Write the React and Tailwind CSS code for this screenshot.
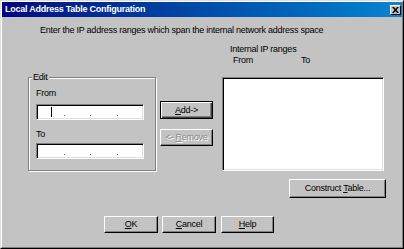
import React from 'react'

const font = { fontFamily: '"Liberation Sans", Arial, sans-serif' }

function Btn({ children, className = '', isDefault = false, disabled = false }) {
  const frame = isDefault
    ? 'border border-black shadow-[inset_1px_1px_#fff,inset_-1px_-1px_#404040,inset_-2px_-2px_#808080]'
    : 'border border-t-white border-l-white border-r-black border-b-black shadow-[inset_-1px_-1px_#808080]'
  return (
    <div className={`flex items-center justify-center bg-[#c3c3c3] text-[9px] tracking-[-0.25px] leading-none whitespace-nowrap ${frame} ${className} ${disabled ? 'text-[#8a8a8a] [text-shadow:1px_1px_#fff]' : 'text-black'}`}>
      {children}
    </div>
  )
}

function IpBox({ caret = false }) {
  return (
    <div className="relative w-[108px] h-[16px] bg-white border border-t-[#808080] border-l-[#808080] border-r-white border-b-white shadow-[inset_1px_1px_#000,inset_-1px_-1px_#dfdfdf] flex items-center">
      <div className="flex pl-[1px]">
        {[0, 1, 2].map(i => (
          <div key={i} className="w-[26.5px] h-[8px] flex items-end justify-end">
            {caret && i === 0 && <div className="w-[1px] h-[10px] bg-black mr-[12px] mb-[-1px]" />}
            <div className="w-[1px] h-[1px] bg-[#707070]" />
          </div>
        ))}
      </div>
    </div>
  )
}

export default function App() {
  return (
    <div style={font} className="w-[404px] h-[249px] bg-[#c3c3c3] border border-t-[#dfdfdf] border-l-[#dfdfdf] border-r-black border-b-black text-[9px] tracking-[-0.25px] text-black">
      <div className="w-full h-full border border-t-white border-l-white border-r-[#808080] border-b-[#808080] flex flex-col">
        <div className="h-[15px] flex items-center justify-between bg-gradient-to-r from-[#000080] to-[#1084d0] pl-[3px] pr-[1px]">
          <span className="text-white font-bold text-[9px] leading-none">Local Address Table Configuration</span>
          <div className="w-[11px] h-[10px] bg-[#c3c3c3] border border-t-white border-l-white border-r-black border-b-black flex items-center justify-center">
            <svg width="7" height="6" viewBox="0 0 7 6">
              <path d="M0 0h2l1.5 2 1.5-2h2l-2.5 3 2.5 3h-2l-1.5-2-1.5 2h-2l2.5-3z" fill="#000" />
            </svg>
          </div>
        </div>

        <div className="leading-[13px] mt-[7px] pl-[38px] whitespace-nowrap">
          Enter the IP address ranges which span the internal network address space
        </div>

        <div className="flex mt-[6px] pl-[26px]">
          <div className="relative mt-[34px] w-[128px] h-[94px] border border-[#808080] shadow-[inset_1px_1px_#fff,1px_1px_#fff]">
            <span className="absolute left-[3px] top-[-7px] bg-[#c3c3c3] px-[1px] leading-[13px]">Edit</span>
            <div className="pl-[7px]">
              <div className="mt-[9px] leading-[13px]">From</div>
              <div className="mt-[4px]"><IpBox caret /></div>
              <div className="mt-[8px] leading-[13px]">To</div>
              <div className="mt-[2px]"><IpBox /></div>
            </div>
          </div>

          <div className="ml-[4px] mt-[58px] flex flex-col">
            <Btn isDefault className="w-[53px] h-[18px]"><span><u>A</u>dd-&gt;</span></Btn>
            <Btn disabled className="w-[53px] h-[17px] mt-[10px]"><span>&lt;- <u>R</u>emove</span></Btn>
          </div>

          <div className="ml-[9px] flex flex-col">
            <div className="pl-[8px] leading-[13px]">Internal IP ranges</div>
            <div className="flex pl-[11px] leading-[13px] mt-[-2px]">
              <span className="w-[68px]">From</span>
              <span>To</span>
            </div>
            <div className="mt-[10px] w-[162px] h-[94px] bg-white border border-t-[#808080] border-l-[#808080] border-r-white border-b-white shadow-[inset_1px_1px_#000,inset_-1px_-1px_#dfdfdf]" />
          </div>
        </div>

        <div className="flex justify-end pr-[16px] mt-[8px]">
          <Btn className="w-[97px] h-[19px]"><span>Construct <u>T</u>able...</span></Btn>
        </div>

        <div className="flex pl-[102px] mt-[18px] gap-[4px]">
          <Btn className="w-[54px] h-[17px]"><span><u>O</u>K</span></Btn>
          <Btn className="w-[54px] h-[17px]"><span><u>C</u>ancel</span></Btn>
          <Btn className="w-[53px] h-[17px] ml-[1px]"><span><u>H</u>elp</span></Btn>
        </div>
      </div>
    </div>
  )
}
